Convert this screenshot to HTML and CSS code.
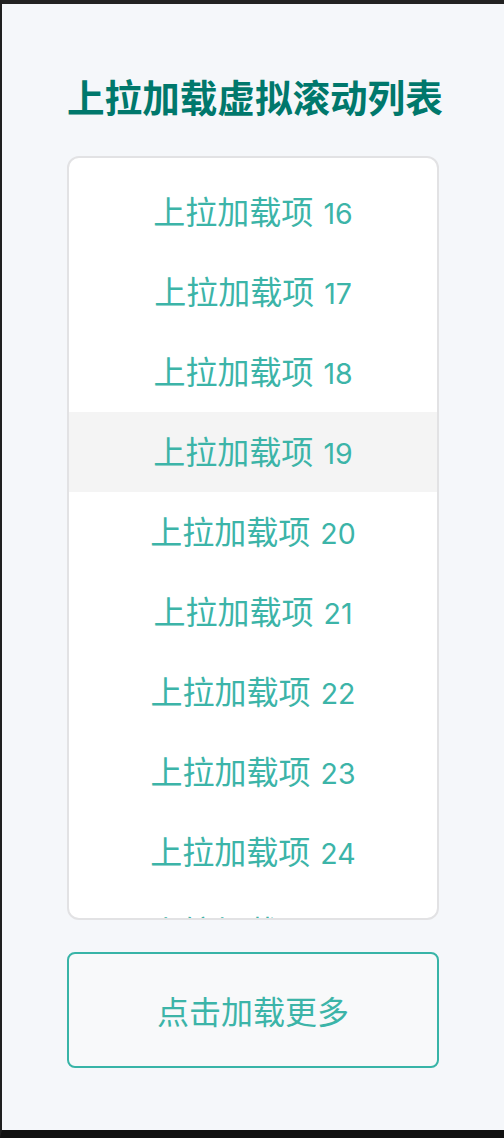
FILE: index.html
```html
<!DOCTYPE html>
<html lang="zh-CN">
<head>
<meta charset="utf-8">
<title>上拉加载虚拟滚动列表</title>
<link rel="stylesheet" href="styles.css">
</head>
<body>
<div class="frame">
  <main class="page">
    <h1 class="title">上拉加载虚拟滚动列表</h1>
    <div class="list">
      <div class="list-inner">
        <div class="row">上拉加载项<span class="num">16</span></div>
        <div class="row">上拉加载项<span class="num">17</span></div>
        <div class="row">上拉加载项<span class="num">18</span></div>
        <div class="row row-active">上拉加载项<span class="num">19</span></div>
        <div class="row">上拉加载项<span class="num">20</span></div>
        <div class="row">上拉加载项<span class="num">21</span></div>
        <div class="row">上拉加载项<span class="num">22</span></div>
        <div class="row">上拉加载项<span class="num">23</span></div>
        <div class="row">上拉加载项<span class="num">24</span></div>
        <div class="row">上拉加载项<span class="num">25</span></div>
      </div>
    </div>
    <button class="load-more" type="button">点击加载更多</button>
  </main>
</div>
</body>
</html>
```

FILE: styles.css
```css
html, body {
  margin: 0;
  padding: 0;
  background: #111111;
}

.frame {
  box-sizing: border-box;
  height: 1138px;
  border-top: 4px solid #222222;
  border-left: 2px solid #1f1f1f;
  border-bottom: 8px solid #111111;
  background: #f5f7fa;
  font-family: "Noto Sans CJK SC", "Noto Sans", sans-serif;
  overflow: hidden;
}

.page {
  width: 372px;
  margin: 0 auto;
  padding-top: 70px;
  display: flex;
  flex-direction: column;
}

.title {
  margin: 0;
  font-size: 37.6px;
  line-height: 44px;
  font-weight: 700;
  color: #00786c;
  text-align: center;
  white-space: nowrap;
}

.list {
  box-sizing: border-box;
  margin-top: 38px;
  height: 764px;
  background: #ffffff;
  border: 2px solid #e2e2e4;
  border-radius: 12px;
  overflow: hidden;
}

.list-inner {
  padding-top: 14px;
}

.row {
  height: 80px;
  line-height: 76px;
  padding-bottom: 4px;
  box-sizing: border-box;
  text-align: center;
  font-size: 32px;
  color: #3cb4a8;
  white-space: nowrap;
}

.row-active {
  background: #f4f4f4;
}

.num {
  margin-left: 10px;
  font-family: "Inter", "Noto Sans", sans-serif;
  font-size: 28.5px;
}

.load-more {
  box-sizing: border-box;
  margin-top: 32px;
  width: 100%;
  height: 116px;
  border: 2px solid #38b4a7;
  border-radius: 8px;
  background: #f8f9fa;
  color: #3cb4a8;
  font-family: "Noto Sans CJK SC", "Noto Sans", sans-serif;
  font-size: 32px;
  padding: 0;
}
```
